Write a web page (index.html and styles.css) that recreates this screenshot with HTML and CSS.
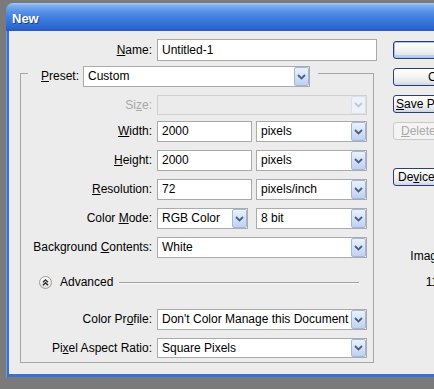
FILE: index.html
```html
<!DOCTYPE html>
<html>
<head>
<meta charset="utf-8">
<title>New</title>
<link rel="stylesheet" href="styles.css">
</head>
<body>
<div class="window">
  <div class="titlebar"><span class="title">New</span></div>
  <div class="frame">
    <div class="client">
      <div class="form">
        <div class="name-row">
          <label class="lbl name-lbl"><u>N</u>ame:</label>
          <div class="input name-input">Untitled-1</div>
        </div>
        <div class="group">
          <div class="group-head">
            <span class="seg seg-left"></span>
            <label class="lbl preset-lbl"><u>P</u>reset:</label>
            <div class="select preset-select"><span class="val">Custom</span><span class="arrow"><svg width="9" height="6" viewBox="0 0 9 6"><polyline points="1,1 4.5,4.5 8,1" /></svg></span></div>
            <span class="seg seg-right"></span>
          </div>
          <div class="group-body">
            <div class="row row-size">
              <label class="lbl disabled">Si<u>z</u>e:</label>
              <div class="select sel-full is-disabled"><span class="val"></span><span class="arrow"><svg width="9" height="6" viewBox="0 0 9 6"><polyline points="1,1 4.5,4.5 8,1" /></svg></span></div>
            </div>
            <div class="row">
              <label class="lbl"><u>W</u>idth:</label>
              <div class="input num-input">2000</div>
              <div class="select unit-select"><span class="val">pixels</span><span class="arrow"><svg width="9" height="6" viewBox="0 0 9 6"><polyline points="1,1 4.5,4.5 8,1" /></svg></span></div>
            </div>
            <div class="row">
              <label class="lbl"><u>H</u>eight:</label>
              <div class="input num-input">2000</div>
              <div class="select unit-select"><span class="val">pixels</span><span class="arrow"><svg width="9" height="6" viewBox="0 0 9 6"><polyline points="1,1 4.5,4.5 8,1" /></svg></span></div>
            </div>
            <div class="row">
              <label class="lbl"><u>R</u>esolution:</label>
              <div class="input num-input">72</div>
              <div class="select unit-select"><span class="val">pixels/inch</span><span class="arrow"><svg width="9" height="6" viewBox="0 0 9 6"><polyline points="1,1 4.5,4.5 8,1" /></svg></span></div>
            </div>
            <div class="row">
              <label class="lbl">Color <u>M</u>ode:</label>
              <div class="select mode-select"><span class="val">RGB Color</span><span class="arrow"><svg width="9" height="6" viewBox="0 0 9 6"><polyline points="1,1 4.5,4.5 8,1" /></svg></span></div>
              <div class="select unit-select"><span class="val">8 bit</span><span class="arrow"><svg width="9" height="6" viewBox="0 0 9 6"><polyline points="1,1 4.5,4.5 8,1" /></svg></span></div>
            </div>
            <div class="row">
              <label class="lbl">Background <u>C</u>ontents:</label>
              <div class="select sel-full"><span class="val">White</span><span class="arrow"><svg width="9" height="6" viewBox="0 0 9 6"><polyline points="1,1 4.5,4.5 8,1" /></svg></span></div>
            </div>
            <div class="advanced">
              <svg class="adv-icon" width="13" height="13" viewBox="0 0 13 13">
                <defs><linearGradient id="g" x1="0" y1="0" x2="0" y2="1"><stop offset="0" stop-color="#ffffff"/><stop offset="1" stop-color="#dcdcdc"/></linearGradient></defs>
                <circle cx="6.5" cy="6.5" r="6" fill="url(#g)" stroke="#9a9a9a" stroke-width="1"/>
                <polyline points="4,6.3 6.5,3.8 9,6.3" fill="none" stroke="#222" stroke-width="1.3"/>
                <polyline points="4,9.2 6.5,6.7 9,9.2" fill="none" stroke="#222" stroke-width="1.3"/>
              </svg>
              <span class="adv-text">Advanced</span>
              <span class="adv-line"></span>
            </div>
            <div class="row">
              <label class="lbl">Color Pr<u>o</u>file:</label>
              <div class="select sel-full"><span class="val">Don't Color Manage this Document</span><span class="arrow"><svg width="9" height="6" viewBox="0 0 9 6"><polyline points="1,1 4.5,4.5 8,1" /></svg></span></div>
            </div>
            <div class="row row-last">
              <label class="lbl">Pi<u>x</u>el Aspect Ratio:</label>
              <div class="select sel-full"><span class="val">Square Pixels</span><span class="arrow"><svg width="9" height="6" viewBox="0 0 9 6"><polyline points="1,1 4.5,4.5 8,1" /></svg></span></div>
            </div>
          </div>
        </div>
      </div>
      <div class="side">
        <div class="btn btn-ok">OK</div>
        <div class="btn btn-cancel">Cancel</div>
        <div class="btn btn-save"><u>S</u>ave Preset...</div>
        <div class="btn btn-delete is-disabled"><u>D</u>elete Preset...</div>
        <div class="btn btn-device">De<u>v</u>ice Central...</div>
        <div class="info">
          <div class="info-line">Image Size:</div>
          <div class="info-line">11.4M</div>
        </div>
      </div>
    </div>
  </div>
</div>
</body>
</html>
```
FILE: styles.css
```css
html, body {
  margin: 0;
  padding: 0;
}
body {
  background: #7a7a7a;
  height: 389px;
  overflow: hidden;
  font-family: "Liberation Sans", Arial, sans-serif;
  font-size: 12px;
  color: #000;
}
u { text-decoration: underline; text-underline-offset: 1px; }

.window {
  margin: 3px 0 0 6px;
  width: 540px;
}
.titlebar {
  height: 28px;
  box-sizing: border-box;
  border-radius: 7px 7px 0 0;
  background: linear-gradient(#a3c8f5 0, #79abee 3px, #5a93e8 8px, #4584e2 13px, #3877dc 18px, #2e68d2 24px, #2659c3 28px);
  display: flex;
  align-items: center;
  padding-left: 6px;
  padding-top: 2px;
}
.title {
  color: #fff;
  font-weight: bold;
  font-size: 13px;
  text-shadow: 1px 1px 0 #1b3f8f;
}
.frame {
  background: #3a6fd6;
  padding: 0 0 3px 3px;
  box-shadow: inset 1px 0 0 #6b9ae6;
}
.client {
  background: #ececec;
  height: 343px;
  box-sizing: border-box;
  padding-top: 8px;
  display: flex;
}

.form { width: 368px; flex: none; }

.lbl {
  display: block;
  text-align: right;
  white-space: nowrap;
  line-height: 21px;
  flex: none;
}
.lbl.disabled { color: #a8a8a8; }

.name-row { display: flex; height: 22px; }
.name-lbl { width: 143px; margin-right: 5px; line-height: 22px; }

.input {
  box-sizing: border-box;
  border: 1px solid #a9a9a9;
  background: #fff;
  padding-left: 4px;
  line-height: 19px;
  white-space: nowrap;
  flex: none;
}
.name-input { width: 220px; line-height: 20px; }

.select {
  box-sizing: border-box;
  border: 1px solid #ababab;
  background: #fff;
  display: flex;
  flex: none;
}
.select .val {
  flex: 1;
  padding-left: 4px;
  line-height: 19px;
  white-space: nowrap;
  overflow: hidden;
}
.select .arrow {
  width: 15px;
  flex: none;
  box-sizing: border-box;
  border: 1px solid #a3b7db;
  border-radius: 2px;
  background: linear-gradient(#eaf1fc, #d3e0f6 55%, #bfd1f0);
  display: flex;
  align-items: center;
  justify-content: center;
}
.select .arrow polyline {
  fill: none;
  stroke: #4a5f86;
  stroke-width: 1.8;
}
.select.is-disabled { background: #ebebeb; border-color: #d0d0d0; }
.select.is-disabled .arrow {
  background: #eef2f8;
  border-color: #d8e0ec;
}
.select.is-disabled .arrow polyline { stroke: #bcc7d8; }

.group { margin: 5px 0 0 11px; width: 354px; }
.group-head { display: flex; height: 21px; }
.seg {
  margin-top: 7px;
  border-top: 1px solid #a6a6a6;
  box-sizing: border-box;
}
.seg-left {
  width: 8px;
  border-left: 1px solid #a6a6a6;
  margin-right: 13px;
  flex: none;
}
.seg-right {
  flex: 1;
  margin-left: 8px;
  border-right: 1px solid #a6a6a6;
}
.preset-lbl { margin-right: 4px; }
.preset-select { width: 227px; }

.group-body {
  border: 1px solid #a6a6a6;
  border-top: 0;
  padding: 8px 6px 4px 0;
  display: flex;
  flex-direction: column;
  gap: 8px;
}
.row { display: flex; height: 21px; }
.row .lbl { width: 131px; margin-right: 5px; }
.row-size { height: 20px; margin-bottom: -2px; }
.row-size .lbl { line-height: 20px; }
.row-last { height: 20px; }
.row-last .lbl { line-height: 20px; }
.row-last .val, .row-size .val { line-height: 18px; }

.sel-full { width: 210px; }
.num-input { width: 95px; margin-right: 4px; }
.unit-select { width: 111px; }
.mode-select { width: 91px; margin-right: 8px; }

.advanced {
  display: flex;
  align-items: center;
  height: 16px;
  margin: 8px 0 11px;
  padding-left: 18px;
}
.adv-icon { flex: none; margin-right: 8px; }
.adv-text { flex: none; }
.adv-line {
  flex: 1;
  margin: 1px 8px 0 6px;
  border-top: 1px solid #9e9e9e;
  border-bottom: 1px solid #fafafa;
}

.side {
  margin-left: 16px;
  padding-top: 2px;
  display: flex;
  flex-direction: column;
  gap: 9px;
}
.btn {
  width: 110px;
  height: 18px;
  box-sizing: border-box;
  border: 1px solid #2a3f70;
  border-radius: 3px;
  background: linear-gradient(#ffffff, #f6f6f4 40%, #e4e7ee 80%, #cdd4e3);
  line-height: 16px;
  white-space: nowrap;
}
.btn-ok { padding-left: 44px; box-shadow: inset 0 0 0 1px #a8c3ec, inset 0 -2px 0 1px #b9cff0; }
.btn-cancel { padding-left: 34px; }
.btn-save { padding-left: 2px; }
.btn-delete { padding-left: 7px; }
.btn-device { padding-left: 4px; margin-top: 19px; }
.btn.is-disabled {
  color: #a9a9a9;
  border-color: #c9c9c9;
  background: #f4f4f4;
}
.info {
  margin-top: 48px;
  width: 98px;
  text-align: center;
}
.info-line { line-height: 26px; }
```
